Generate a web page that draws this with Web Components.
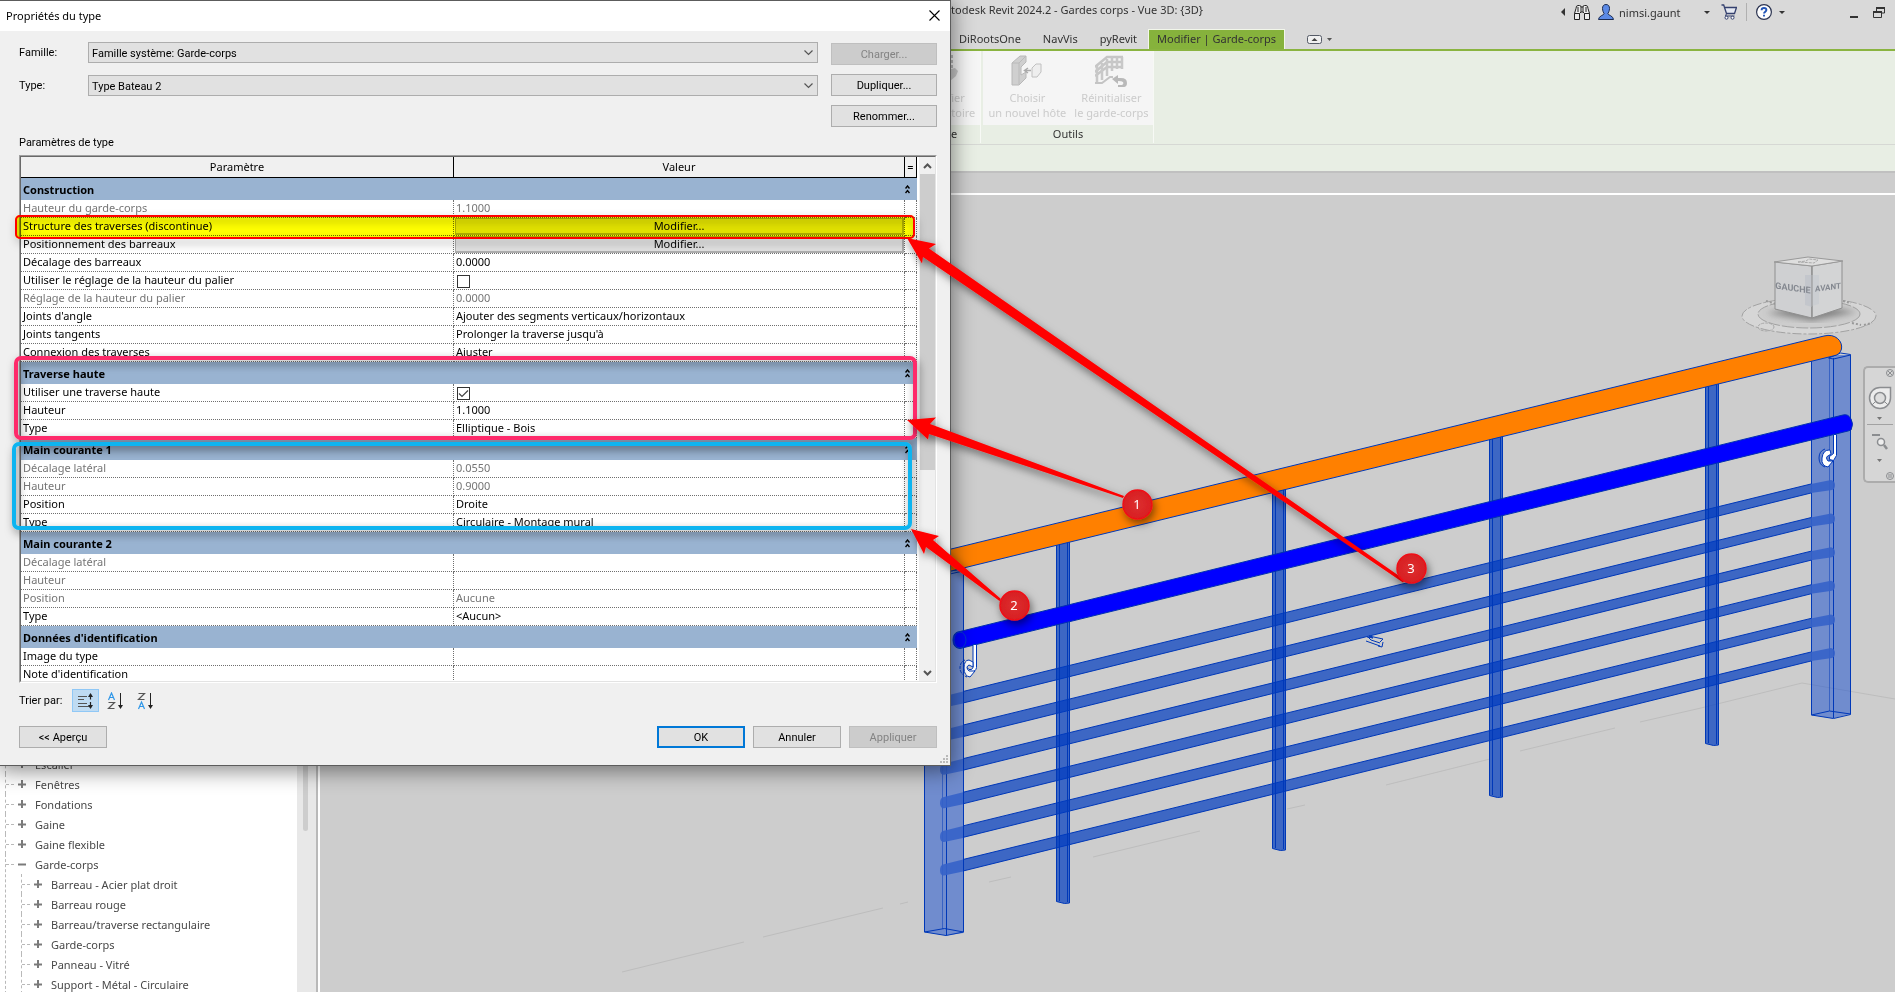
<!DOCTYPE html>
<html lang="fr">
<head>
<meta charset="utf-8">
<title>Autodesk Revit 2024.2 - Gardes corps</title>
<style>
  html, body { margin: 0; height: 100%; }
  body { position: relative; overflow: hidden; background: #cdcdcd; font: 11px/15px "Noto Sans", "Open Sans", sans-serif; color: #000; }
</style>
</head>
<body>
<revit-app></revit-app>
<type-dialog></type-dialog>
<highlight-box></highlight-box>
<callout-layer></callout-layer>

<script>
const define = (name, html, setup) => {
  const template = document.createElement('template');
  template.innerHTML = html;
  customElements.define(name, class extends HTMLElement {
    constructor() {
      super();
      this.attachShadow({ mode: 'open' }).append(template.content.cloneNode(true));
    }
    connectedCallback() {
      if (setup && !this.ready) { this.ready = true; setup(this, this.shadowRoot); }
    }
  });
};

/* ---------- main window: title bar ---------- */
define('title-bar', `
<style>
  :host { display: grid; grid-template-columns: 1203px 1fr auto; align-items: center; height: 28px; background: #d9d9d9; color: #333; }
  .title { text-align: right; white-space: nowrap; padding-bottom: 10px; }
  .tools { display: flex; align-items: center; justify-content: flex-end; height: 24px; margin-bottom: 4px; padding-right: 10px; grid-column: 3; }
  button { appearance: none; border: 0; padding: 0; background: none; display: flex; align-items: center; font: inherit; color: inherit; }
  svg { display: block; }
  .sep { width: 1px; height: 18px; background: #b0b0b0; margin: 0 9px; }
</style>
<div class="title">Autodesk Revit 2024.2 - Gardes corps - Vue 3D: {3D}</div>
<div class="tools">
  <button aria-label="Réduire la recherche" style="margin-right:9px"><svg width="4" height="8"><path d="M4 0v8L0 4z" fill="#333"/></svg></button>
  <button aria-label="Rechercher" style="margin-right:8px"><svg width="16" height="16" viewBox="0 0 16 16"><path d="M2 4.500Q2 1.500 4 1.500h1.500Q7 1.500 7 3h2q0-1.500 1.500-1.500H12q2 0 2 3l1.500 5v6h-5v-6L9 8H7l-1.500 1.500v6h-5v-6z" fill="#eee" stroke="#222"/><path d="M.5 9.500h5M10.500 9.500h5M7 3v5M9 3v5M4 3v5M12 3v5" stroke="#222" fill="none"/></svg></button>
  <button aria-label="Compte" style="width:106px;gap:5px"><svg width="16" height="16" viewBox="0 0 16 16"><path d="M8 .5c2.500 0 3.500 1.700 3.500 4S10.300 9 9.800 9.800c.2 1.200 5.700 2.200 5.700 5.700H.5c0-3.500 5.500-4.500 5.700-5.700C5.700 9 4.500 6.800 4.500 4.500S5.500.5 8 .5z" fill="#5c8ae6" stroke="#1c2c52"/></svg><span>nimsi.gaunt</span></button>
  <button aria-label="Menu du compte" style="margin-right:11px"><svg width="6" height="3"><path d="M0 0h6L3 3z" fill="#333"/></svg></button>
  <button aria-label="Boutique"><svg width="16" height="16" viewBox="0 0 16 16"><path d="M.5 1h2.200L5.500 9.500h8l2-6H4" fill="#e4e8f2" stroke="#34406e" stroke-width="1.300"/><path d="M5.500 9.500L4.500 12h9" fill="none" stroke="#34406e"/><circle cx="5.500" cy="13.700" r="1.500" fill="#fff" stroke="#34406e"/><circle cx="11.500" cy="13.700" r="1.500" fill="#fff" stroke="#34406e"/></svg></button>
  <span class="sep"></span>
  <button aria-label="Aide" style="margin-right:7px"><svg width="16" height="16" viewBox="0 0 16 16"><circle cx="8" cy="8" r="7.400" fill="#fff" stroke="#2b3350" stroke-width="1.200"/><path d="M5.600 6.200C5.600 4.600 6.600 4 8 4s2.400.7 2.400 2C10.400 7.500 8 7.800 8 9.500M8 10.700v1.800" fill="none" stroke="#2255b8" stroke-width="1.900"/></svg></button>
  <button aria-label="Menu d'aide" style="margin-right:65px"><svg width="6" height="3"><path d="M0 0h6L3 3z" fill="#333"/></svg></button>
  <button aria-label="Réduire" style="margin-right:15px"><svg width="8" height="12"><path d="M0 10h8v2H0z" fill="#333"/></svg></button>
  <button aria-label="Restaurer"><svg width="12" height="11" viewBox="0 0 12 11"><path d="M3.500 4V1h8v5H9" fill="none" stroke="#333"/><path d="M3 0h9v2H3zM0 4h9v2H0z" fill="#333"/><path d="M.5 5v5.500h8V5" fill="none" stroke="#333"/></svg></button>
</div>`);

/* ---------- ribbon tabs ---------- */
define('ribbon-tabs', `
<style>
  :host { display: flex; align-items: flex-end; height: 21px; padding-left: 948px; background: #d9d9d9; border-bottom: 2px solid #8ab440; color: #333; }
  button { appearance: none; font: inherit; color: inherit; background: none; border: 0; margin: 0; padding: 0 11px 2px; height: 20px; white-space: nowrap; }
  button.active { background: #86b23c; border: 1px solid #f2f6ea; border-bottom: 0; padding: 0 8px 2px; margin-right: 22px; }
  button.toggle { display: flex; align-items: center; gap: 5px; padding: 0; }
</style>
<button>DiRootsOne</button><button>NavVis</button><button>pyRevit</button><button class="active">Modifier | Garde-corps</button>
<button class="toggle" aria-label="Réduire le ruban"><svg width="15" height="9" viewBox="0 0 15 9"><rect x=".5" y=".5" width="14" height="8" rx="2" fill="#f0f0f0" stroke="#555b66"/><path d="M4.500 6h6l-3-3z" fill="#444"/></svg><svg width="5" height="3"><path d="M0 0h5L2.500 3z" fill="#555"/></svg></button>`);

/* ---------- ribbon ---------- */
define('ribbon-panel', `
<style>
  :host { display: flex; flex-direction: column; height: 92px; box-sizing: border-box; border-right: 1px solid #f7f9f5; }
  .tools { display: flex; justify-content: center; gap: 8px; height: 74px; padding: 0 4px 0 5px; background: #f5f5f5; box-sizing: border-box; }
  .name { text-align: center; line-height: 18px; color: #333; margin: 0 1px; }
</style>
<div class="tools"><slot></slot></div><div class="name"><slot name="name"></slot></div>`);

define('ribbon-tool', `
<style>
  :host { display: block; }
  button { appearance: none; font: inherit; border: 0; background: none; padding: 4px 0 0; margin: 0; color: #cbcbcb; text-align: center; display: flex; flex-direction: column; align-items: center; white-space: nowrap; }
  .icon { height: 32px; margin-bottom: 3px; }
</style>
<button disabled><span class="icon"><slot name="icon"></slot></span><slot></slot></button>`);

define('app-ribbon', `
<style>
  :host { display: block; background: #e8eee4; }
  .panels { display: flex; gap: 2px; padding-left: 905px; height: 93px; border-bottom: 1px solid #d6d8d4; }
  .options { height: 26px; border-bottom: 2px solid #c0c0c0; }
  svg { display: block; }
  ribbon-panel:first-child { width: 76px; }
  ribbon-panel:last-child { width: 171px; }
</style>
<div class="panels">
  <ribbon-panel><ribbon-tool>
    <svg slot="icon" width="32" height="32" viewBox="0 0 32 32"><path d="M25 0v14" stroke="#bbb" stroke-dasharray="3 2" stroke-width="2"/><path d="M24 14l4-1 3 3-2 5-6 5-2-4z" fill="#c9c9c9"/></svg>
    <span>Modifier</span><span>la trajectoire</span></ribbon-tool><span slot="name">Mode</span></ribbon-panel>
  <ribbon-panel>
    <ribbon-tool><svg slot="icon" width="32" height="32" viewBox="0 0 32 32"><path d="M1 8l8-7h6v6l-5 5v8l5-3v6l-7 7H1z" fill="#cfcfcf" stroke="#b8b8b8"/><path d="M1 8h7v21M8 8l7-7" fill="none" stroke="#bababa"/><path d="M21 13l4-4h5v8l-4 5h-5z" fill="#eee" stroke="#c0c0c0"/><path d="M20 15.500h-6M17 13l-3.500 2.500L17 18" stroke="#aaa" fill="none" stroke-width="1.500"/></svg>
      <span>Choisir</span><span>un nouvel hôte</span></ribbon-tool>
    <ribbon-tool><svg slot="icon" width="32" height="32" viewBox="0 0 32 32"><path d="M0 12L12 2h16M0 17L12 7h16M0 21l12-9h16" fill="none" stroke="#c6c6c6" stroke-width="2.500"/><path d="M2 11v16M7 8v17M12 4v17M17 2v14M22 2v12M27 2v12" stroke="#c8c8c8" stroke-width="2.500"/><path d="M0 28h7l8-6h3" fill="none" stroke="#c4c4c4" stroke-width="2"/><path d="M17 24l6-4v3h3q6 0 6 5t-6 4h-3v-2h4q2-1 1-3-1-1-5-1v3z" fill="#b9b9b9"/></svg>
      <span>Réinitialiser</span><span>le garde-corps</span></ribbon-tool>
    <span slot="name">Outils</span>
  </ribbon-panel>
</div>
<div class="options"></div>`);

/* ---------- project browser ---------- */
define('tree-item', `
<style>
  :host { display: block; border-left: 1px dashed #b9b9b9; }
  .row { display: flex; align-items: center; height: 20px; color: #484848; white-space: nowrap; }
  .dash { width: 8px; border-top: 1px dashed #b9b9b9; margin-right: 4px; }
  svg { margin-right: 8px; }
  :host(:not([open])) .children { display: none; }
  .children { padding-left: 15px; }
  :host([open]) .v { display: none; }
</style>
<div class="row"><span class="dash"></span><svg width="9" height="9"><path d="M0 3.500h8v2H0z" fill="#7a7a7a"/><path class="v" d="M3 0h2v8H3z" fill="#7a7a7a"/></svg><slot name="label"></slot></div>
<div class="children"><slot></slot></div>`);

define('project-browser', `
<style>
  :host { display: flex; width: 320px; background: #fff; overflow: hidden; flex: none; }
  .list { flex: 1; padding: 581px 0 0 5px; height: 0; }
  .track { width: 13px; padding: 0 0 0 6px; background: #e8e8e8; }
  .thumb { width: 5px; height: 658px; border-radius: 3px; background: #cdcdcd; }
  .split { width: 2px; background: #b9b9b9; border-right: 2px solid #fff; }
</style>
<div class="list"></div><div class="track"><div class="thumb"></div></div><div class="split"></div>`, (host, root) => {
  const item = (label, children) => {
    const el = document.createElement('tree-item');
    const span = document.createElement('span');
    span.slot = 'label'; span.textContent = label;
    el.append(span);
    if (children) { el.setAttribute('open', ''); el.append(...children.map(c => item(c))); }
    return el;
  };
  root.querySelector('.list').append(
    item('Escalier'), item('Fenêtres'), item('Fondations'), item('Gaine'), item('Gaine flexible'),
    item('Garde-corps', ['Barreau - Acier plat droit', 'Barreau rouge', 'Barreau/traverse rectangulaire', 'Garde-corps', 'Panneau - Vitré', 'Support - Métal - Circulaire']));
});

/* ---------- 3D view ---------- */
define('view-cube', `
<style>
  :host { display: block; width: 140px; height: 86px; }
  svg { display: block; overflow: visible; }
  text { font: 700 9px Roboto, sans-serif; fill: #858991; text-anchor: middle; }
  text.front { font-size: 8px; }
</style>
<svg width="140" height="86" viewBox="1740 254 140 86">
  <defs><filter id="soft"><feGaussianBlur stdDeviation="3"/></filter></defs>
  <path fill-rule="evenodd" d="M1742 316a67 18 0 1 0 134 0a67 18 0 1 0-134 0zM1758 314a51 14 0 1 0 102 0a51 14 0 1 0-102 0z" fill="#d6d6d6"/>
  <ellipse cx="1809" cy="316" rx="67" ry="18" fill="none" stroke="#a2a2a2" stroke-dasharray="9 2 3 2"/>
  <ellipse cx="1809" cy="314" rx="51" ry="14" fill="none" stroke="#a2a2a2" stroke-dasharray="12 2"/>
  <ellipse cx="1766" cy="327" rx="8" ry="4" fill="none" stroke="#a8a8a8" stroke-dasharray="3 1"/>
  <path d="M1766 301l10 3M1843 301l8 2M1852 323l9 2M1864 325l8-2" stroke="#999" stroke-width="2" stroke-dasharray="2 2"/>
  <path d="M1766 313l46 8 45-9-45-8z" fill="#666" opacity=".7" filter="url(#soft)"/>
  <path d="M1775 262l37 4v52l-37-9z" fill="#cfd0d2" stroke="#8f8f8f"/>
  <path d="M1842 261l-30 5v52l30-10z" fill="#d3d4d5" stroke="#8f8f8f"/>
  <path d="M1774 262l34-5 35 4-31 5z" fill="#dedede" stroke="#999"/>
  <path d="M1798 262l8-1 3-2 9 1-4 3z" fill="none" stroke="#aaa" stroke-dasharray="3 1"/>
  <path d="M1805 275h7v32l-7-2z" fill="#c3c6cc"/><path d="M1812 275h7v29l-7 2z" fill="#cbced2"/>
  <path d="M1812 266v52" stroke="#8f8f8f"/>
  <text transform="translate(1793 291) skewY(8)">GAUCHE</text>
  <text class="front" transform="translate(1828 290) skewY(-8)">AVANT</text>
</svg>`);

define('nav-bar', `
<style>
  :host { display: flex; flex-direction: column; align-items: center; width: 34px; height: 113px; border: 2px solid #acacac; border-right: 0; border-radius: 5px 0 0 5px; background: #d6d6d6; }
  button { appearance: none; border: 0; background: none; padding: 0; display: block; }
  svg { display: block; }
</style>
<button aria-label="Disque de navigation et zoom"><svg width="34" height="113" viewBox="1866 368 34 113" fill="none">
  <g stroke="#8b8d90">
    <circle cx="1891" cy="373" r="3.500"/><path d="M1889 371l4 4M1893 371l-4 4"/>
    <path d="M1881 387.500h10.500v10.500a10.500 10.500 0 1 1-10.500-10.500z" fill="#ececec" stroke-width="1.500"/>
    <circle cx="1881" cy="398" r="5.500" fill="#dedede" stroke-width="1.500"/><path d="M1873 405l4-4M1889 405l-4-4"/>
    <path d="M1868 424.500h26" stroke="#a2a2a2"/><path d="M1873 435h8" stroke-width="2"/>
    <circle cx="1882" cy="442" r="3.500" fill="#eee" stroke-width="1.500"/><path d="M1885 445l3 4" stroke-width="2.500"/>
    <circle cx="1891" cy="476" r="3.500"/><path d="M1889 475h4M1889 477h4"/></g>
  <path d="M1878 417h5l-2.500 3zM1878 459h5l-2.500 3z" fill="#777"/>
</svg></button>`);

define('model-view', `
<style>
  :host { display: block; position: relative; overflow: hidden; background: #cdcdcd; flex: 1; }
  .scene { display: block; position: absolute; inset: 0; width: 100%; height: 100%; }
  view-cube { position: absolute; right: 15px; top: 59px; }
  nav-bar { position: absolute; right: -4px; top: 171px; }
  .edge { stroke: #0038b8; stroke-width: 1; fill: none; }
  .post { fill: rgba(0,62,208,.45); }
  .bar { fill: rgba(0,60,192,.7); stroke: #0038b8; }
</style>
<svg class="scene" viewBox="320 195 1575 797" preserveAspectRatio="xMinYMin slice">
  <path d="M622 972l122-30M763 937l120-29M900 904l8-2M989 882l22-5M1093 857l107-26M1287 809l18-4M1386 785l104-26M1520 751l95-23M1640 722l61-14 101-25 93 16" stroke="#bdbdbd" fill="none"/>
  <g id="rails"></g>
  <g id="balusters"></g>
  <g class="post"><path d="M924 565h39.500v368L946 935.500 924 932z"/><path d="M1811.500 361L1829 355l21.500 0v359l-18 4.500-21-3.500z"/></g>
  <path class="edge" d="M924.500 570v362l21.500 3.500 17.500-3.500V570M946.500 570v365M924.500 932l20-3.500 19 3.500M950 571l13-2M950 574l13-3"/>
  <path class="edge" d="M942.500 700v229" opacity=".5"/>
  <path class="edge" d="M1811.500 361v354l22 3.500 17-4V354.500l-10-1.500-12 5 5 1 17-4M1833.500 358v360M1811.500 715l18-4 21 3"/>
  <path class="edge" d="M1829.500 357v354" opacity=".5"/>
  <g id="ends" fill="#3562c9"></g>
  <path d="M945 550.500L1824 336C1835 333 1843 341 1841.500 349Q1840 355 1833 356L945 572.500z" fill="#ff8000"/>
  <path class="edge" d="M945 550.500L1824 336C1835 333 1843 341 1841.500 349Q1840 355 1833 356L945 572.500"/>
  <path d="M960 631.500L1843 415Q1848 413.500 1851 419 1854 424 1851 430L1848 431 960 648.500Q953 648 953 640t7-8.500z" fill="#00f" stroke="#0030b0"/>
  <ellipse cx="960" cy="640" rx="6" ry="8" fill="none" stroke="#0038d0"/>
  <g fill="#fff" stroke="#0038b8">
    <path d="M973 644.500v23q-1 3-4 2l-2-2v4l4 1q5-1 5.500-5v-23z"/><path d="M969 660q-5 0-5 8t6 9l5-6-6 0q-4-4 0-6l4 2v-5z"/><path d="M965 660q-5 2-5 8t7 9" fill="none" stroke-dasharray="3 1"/>
    <path d="M1833.500 434.500v19l-4 3v3l4 1 3-5v-21z"/><path d="M1829 450q-6 0-7 8t6 9l5-6-5 0q-3-4 0-5l3-2-1-4z"/><path d="M1825 449q-6 2-6 9t6 9" fill="none"/>
  </g>
  <path d="M1367 637l6 1-4-2 14 3-3 3M1368 637l3 3 9 3M1383 642l-1 5-4-1M1366 641l14 5" class="edge"/>
</svg>
<view-cube></view-cube>
<nav-bar></nav-bar>`, (host, root) => {
  const rails = [], ends = [];
  for (let i = 0; i < 6; i++) {
    const l = 691.5 + 33.6 * i, r = 484 + 33.6 * i;
    rails.push(`<path d="M963 ${l}L1811 ${r}V${r + 9}L963 ${l + 11.5}z" fill="rgba(0,60,192,.7)"/><path class="edge" d="M963 ${l}L1811 ${r}M963 ${l + 11.5}L1811 ${r + 9}"/>`);
    ends.push(`<path d="M963 ${l}L943 ${l + 5}q-3 1-3 6t4 5L963 ${l + 12}z" opacity=".9"/><path d="M1811 ${r}l20-4q4 1 4 5t-3 5L1811 ${r + 9}z" opacity=".9"/>`);
  }
  root.getElementById('rails').innerHTML = rails.join('');
  root.getElementById('ends').innerHTML = ends.join('');
  root.getElementById('balusters').innerHTML = [[1056, 542, 903], [1272, 490, 850], [1489, 437, 797], [1705, 384, 745]]
    .map(([x, t, b]) => `<path class="bar" d="M${x + .5} ${t + 2}l13-3V${b}l-5 .5-8-2z"/><path class="edge" d="M${x + 3.5} ${t + 1}V${b - 2}M${x + 11.5} ${t}V${b - 1}"/>`).join('');
});

define('revit-app', `
<style>
  :host { display: flex; flex-direction: column; min-height: 100vh; }
  .main { flex: 1; display: flex; }
  .view { flex: 1; display: flex; flex-direction: column; min-width: 0; }
  .strip { height: 20px; border-bottom: 2px solid #fff; background: #cdcdcd; }
</style>
<title-bar></title-bar><ribbon-tabs></ribbon-tabs><app-ribbon></app-ribbon>
<div class="main"><project-browser></project-browser>
<div class="view"><div class="strip"></div><model-view></model-view></div></div>`);

/* ---------- type properties dialog ---------- */
define('dialog-button', `
<style>
  :host { display: block; width: 88px; height: 22px; }
  button { appearance: none; display: block; width: 100%; height: 100%; box-sizing: border-box; margin: 0; padding: 0; border: 1px solid #adadad; background: #e1e1e1; color: #000; font: inherit; text-align: center; }
  :host([primary]) button { border: 2px solid #0078d7; }
  button:disabled { background: #ccc; border-color: #bfbfbf; color: #838383; }
</style>
<button><slot></slot></button>`, (host, root) => {
  root.querySelector('button').disabled = host.hasAttribute('disabled');
});

define('param-table', `
<style>
  :host { display: block; border: 1px solid #a0a0a0; border-color: #a0a0a0 #fff #fff #a0a0a0; }
  .frame { display: flex; height: 524px; overflow: hidden; border: 1px solid #696969; border-color: #696969 #e3e3e3 #e3e3e3 #696969; background: #fff; font: 11px/15px "Noto Sans", sans-serif; }
  .rows { flex: 1; min-width: 0; }
  table { width: 100%; table-layout: fixed; border-collapse: separate; border-spacing: 0; }
  col.p { width: 433px; } col.e { width: 12px; }
  th, td { box-sizing: border-box; padding: 0; text-align: left; vertical-align: top; font-weight: 400; white-space: nowrap; overflow: hidden; }
  thead th { height: 21px; line-height: 19px; text-align: center; background: #f0f0f0; border-right: 1px solid #000; border-bottom: 1px solid #000; }
  tbody td, tbody th { height: 18px; padding-left: 2px; border-right: 1px dotted #6f6f6f; border-bottom: 1px dotted #6f6f6f; }
  tr.off { color: #757575; }
  tbody th.group { height: 22px; border: 0; background: #99b3d1; font-weight: 700; }
  .bar { display: flex; justify-content: space-between; align-items: center; height: 22px; padding-right: 7px; box-sizing: border-box; }
  .bar button { appearance: none; border: 0; background: none; padding: 0; display: block; }
  svg { display: block; }
  td button.edit { appearance: none; display: block; width: 100%; height: 17px; margin: 0; padding: 0; font: inherit; line-height: 14px; color: #000; background: #e1e1e1; border: 1px solid #adadad; border-width: 1px 2px 2px 1px; }
  td.has-button { padding: 0 0 0 1px; }
  input { appearance: none; display: block; width: 13px; height: 13px; box-sizing: border-box; margin: 3px 0 0 1px; border: 1px solid #333; background: #fff; }
  input:checked { background: url('data:image/svg+xml,<svg xmlns="http://www.w3.org/2000/svg" width="11" height="11"><path d="M1 5.500L4 8.500 10 2.500" fill="none" stroke="%23444" stroke-width="1.200"/></svg>'); }
  .scroll { width: 16px; margin-left: 2px; background: #f0f0f0; display: flex; flex-direction: column; align-items: center; }
  .scroll svg { margin: 6px 0 5px; }
  .thumb { width: 15px; height: 296px; background: #cdcdcd; margin-bottom: auto; }
</style>
<div class="frame"><div class="rows"><table>
<colgroup><col class="p"><col><col class="e"></colgroup>
<thead><tr><th>Paramètre</th><th>Valeur</th><th>=</th></tr></thead><tbody></tbody></table></div>
<div class="scroll"><svg width="9" height="6"><path d="M1 5l3.500-3.500L8 5" fill="none" stroke="#555" stroke-width="2"/></svg><div class="thumb"></div><svg width="9" height="6"><path d="M1 1l3.500 3.500L8 1" fill="none" stroke="#555" stroke-width="2"/></svg></div></div>`, (host, root) => {
  const groups = [
    ['Construction', [
      ['Hauteur du garde-corps', '1.1000', 'off'], ['Structure des traverses (discontinue)', 'button'], ['Positionnement des barreaux', 'button'],
      ['Décalage des barreaux', '0.0000'], ['Utiliser le réglage de la hauteur du palier', 'unchecked'], ['Réglage de la hauteur du palier', '0.0000', 'off'],
      ["Joints d'angle", 'Ajouter des segments verticaux/horizontaux'], ['Joints tangents', "Prolonger la traverse jusqu'à"], ['Connexion des traverses', 'Ajuster']]],
    ['Traverse haute', [['Utiliser une traverse haute', 'checked'], ['Hauteur', '1.1000'], ['Type', 'Elliptique - Bois']]],
    ['Main courante 1', [['Décalage latéral', '0.0550', 'off'], ['Hauteur', '0.9000', 'off'], ['Position', 'Droite'], ['Type', 'Circulaire - Montage mural']]],
    ['Main courante 2', [['Décalage latéral', '', 'off'], ['Hauteur', '', 'off'], ['Position', 'Aucune', 'off'], ['Type', '&lt;Aucun&gt;']]],
    ["Données d'identification", [['Image du type', ''], ["Note d'identification", '']]]
  ];
  const value = (v, label) => v === 'button' ? '<td class="has-button"><button class="edit">Modifier...</button></td>'
    : /checked/.test(v) ? `<td><input type="checkbox" aria-label="${label}" ${v === 'checked' ? 'checked' : ''}></td>` : `<td>${v}</td>`;
  root.querySelector('tbody').innerHTML = groups.map(([name, rows]) =>
    `<tr><th class="group" colspan="3"><div class="bar"><span>${name}</span><button aria-label="Réduire ${name}"><svg width="5" height="9" viewBox="0 0 5 9"><path d="M.5 3.500L2.500 1l2 2.500M.5 8L2.500 5.500l2 2.500" fill="none" stroke="#000" stroke-width="1.400"/></svg></button></div></th></tr>` +
    rows.map(([label, v, cls]) => `<tr class="${cls || ''}"><th scope="row">${label}</th>${value(v, label)}<td></td></tr>`).join('')).join('');
});

define('type-dialog', `
<style>
  :host { display: block; position: absolute; z-index: 1; left: 0; top: 0; width: 951px; box-sizing: border-box; border: 1px solid #5c5c5c; border-left: 0; background: #f0f0f0; box-shadow: 0 3px 20px 2px rgba(0,0,0,.45); font: 11px/15px Roboto, "Noto Sans", sans-serif; }
  header { display: flex; justify-content: space-between; align-items: center; height: 28px; padding: 0 10px 2px 6px; background: #fff; font-family: "Noto Sans", sans-serif; }
  header button { appearance: none; border: 0; background: none; padding: 0; display: block; }
  svg { display: block; }
  main { padding: 11px 13px 17px 19px; }
  .form { display: flex; gap: 13px; height: 94px; }
  .fields { flex: 1; display: grid; grid-template-columns: 69px 1fr; grid-auto-rows: 21px; row-gap: 12px; align-items: center; }
  select { appearance: none; width: 100%; height: 21px; box-sizing: border-box; margin: 0; padding: 1px 0 0 3px; border: 1px solid #adadad; border-radius: 0; color: #000; font: inherit;
    background: #e1e1e1 url('data:image/svg+xml,<svg xmlns="http://www.w3.org/2000/svg" width="9" height="6"><path d="M.5 .5l4 4 4-4" fill="none" stroke="%23555" stroke-width="1.200"/></svg>') no-repeat right 4px center; }
  .actions { display: grid; gap: 9px; align-content: start; padding-top: 1px; }
  .actions dialog-button { width: 106px; }
  .caption { line-height: 13px; margin-bottom: 6px; }
  .sort { display: flex; align-items: center; height: 23px; margin: 6px 0 14px; }
  .sort span { width: 53px; }
  .sort button { appearance: none; border: 1px solid transparent; background: none; width: 27px; height: 23px; padding: 0; margin-right: 3px; display: grid; place-items: center; }
  .sort button.on { border-color: #90c8f6; background: #bfdbf2; }
  footer { display: flex; gap: 8px; }
  footer dialog-button:first-child { margin-right: auto; }
  .grip { position: absolute; right: 2px; bottom: 2px; }
</style>
<header><span>Propriétés du type</span><button aria-label="Fermer"><svg width="11" height="11"><path d="M.5 .5l10 10M10.500 .5l-10 10" stroke="#000" stroke-width="1.100"/></svg></button></header>
<main>
  <div class="form">
    <div class="fields">
      <label for="family">Famille:</label><select id="family"><option>Famille système: Garde-corps</option></select>
      <label for="type">Type:</label><select id="type"><option>Type Bateau 2</option></select>
    </div>
    <div class="actions"><dialog-button disabled>Charger...</dialog-button><dialog-button>Dupliquer...</dialog-button><dialog-button>Renommer...</dialog-button></div>
  </div>
  <div class="caption">Paramètres de type</div>
  <param-table></param-table>
  <div class="sort"><span>Trier par:</span>
    <button class="on" aria-label="Ordre par défaut"><svg width="16" height="16" viewBox="0 0 16 16"><path d="M0 3.500h9M0 6.500h6M0 10.500h9M0 13.500h11" stroke="#555"/><path d="M12.500 1v5.500M12.500 9v6" stroke="#222" stroke-width="1.200"/><path d="M10 4l2.500-4L15 4zM10 12l2.500 4 2.500-4z" fill="#222"/></svg></button>
    <button aria-label="Ordre croissant"><svg width="17" height="18" viewBox="0 0 17 18"><path d="M1.500 8L4.500 1l3 7M2.500 5.500h4" fill="none" stroke="#2f97e8" stroke-width="1.200"/><path d="M1.500 10.500h6l-6 6h6" fill="none" stroke="#555" stroke-width="1.200"/><path d="M13.500 1v14" stroke="#222"/><path d="M11 13h5l-2.500 4z" fill="#222"/></svg></button>
    <button aria-label="Ordre décroissant"><svg width="17" height="18" viewBox="0 0 17 18"><path d="M1.500 1.500h6l-6 6h6" fill="none" stroke="#555" stroke-width="1.200"/><path d="M1.500 17l3-7 3 7M2.500 14.500h4" fill="none" stroke="#2f97e8" stroke-width="1.200"/><path d="M13.500 1v14" stroke="#222"/><path d="M11 13h5l-2.500 4z" fill="#222"/></svg></button>
  </div>
  <footer><dialog-button>&lt;&lt; Aperçu</dialog-button><dialog-button primary>OK</dialog-button><dialog-button>Annuler</dialog-button><dialog-button disabled>Appliquer</dialog-button></footer>
</main>
<svg class="grip" width="8" height="8"><path d="M6 0h2v2H6zM3 3h2v2H3zM6 3h2v2H6zM0 6h2v2H0zM3 6h2v2H3zM6 6h2v2H6z" fill="#b9b9b9"/></svg>`);

/* ---------- markup drawn over the windows ---------- */
define('highlight-box', `
<style>
  :host { display: block; position: absolute; z-index: 2; left: 15px; top: 215px; width: 900px; height: 24px; box-sizing: border-box; border-radius: 5px; background: #ff0; mix-blend-mode: multiply; }
</style>`);

define('callout-layer', `
<style>
  :host { display: block; position: absolute; z-index: 3; left: 0; top: 0; pointer-events: none; }
  svg { display: block; overflow: visible; }
  text { font: 13px "Noto Sans", sans-serif; fill: #fff; text-anchor: middle; }
</style>
<svg width="1500" height="700">
  <defs>
    <filter id="shadow" filterUnits="userSpaceOnUse" x="0" y="180" width="1500" height="500"><feDropShadow dx="2" dy="4" stdDeviation="4" flood-opacity=".5"/></filter>
    <radialGradient id="ball"><stop offset="0" stop-color="#dc3030"/><stop offset="1" stop-color="#d81e22"/></radialGradient>
  </defs>
  <g fill="none" filter="url(#shadow)">
    <rect x="16" y="216" width="898" height="22" rx="4" stroke="#f00" stroke-width="2"/>
    <rect x="16" y="358" width="899" height="80" rx="5" stroke="#fe2c6a" stroke-width="4"/>
    <rect x="14" y="444" width="896" height="84" rx="5" stroke="#08b4f0" stroke-width="4"/>
  </g>
  <g fill="#f00" filter="url(#shadow)">
    <path d="M907 238l29 6-7 4.500L1405 580l-2 2.500L923 257l-1 6.500z"/>
    <path d="M907 420l29-2.500-6 6.500L1124 496l-1 2L929 434l-1 5.500z"/>
    <path d="M911 529l28 7-6 4L1001 599l-1.500 2L926 547l-2 7z"/>
  </g>
  <g fill="url(#ball)" stroke="#f01018" stroke-width="1.500" filter="url(#shadow)">
    <circle cx="1137.500" cy="504.500" r="14.500"/><circle cx="1014.500" cy="605.500" r="14.500"/><circle cx="1411.500" cy="568.500" r="14.500"/>
  </g>
  <text x="1137" y="509">1</text><text x="1014" y="610">2</text><text x="1411" y="573">3</text>
</svg>`);
</script>
</body>
</html>
